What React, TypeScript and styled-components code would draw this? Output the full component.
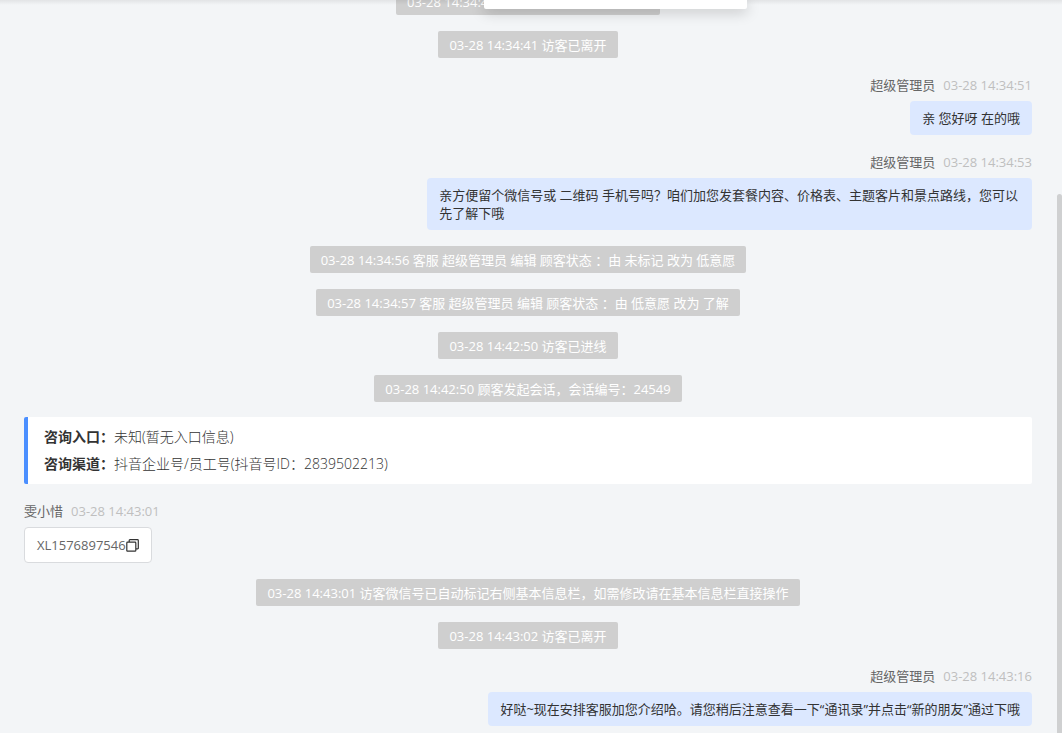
import React from 'react';
import styled, { createGlobalStyle } from 'styled-components';

const GlobalStyle = createGlobalStyle`
  *, *::before, *::after { box-sizing: border-box; }
  body {
    margin: 0;
    background: #f3f5f7;
    font-family: 'Open Sans', 'Noto Sans CJK SC', sans-serif;
    font-size: 13px;
    line-height: 18px;
    color: #333;
  }
`;

const Viewport = styled.div`
  position: relative;
  height: 100vh;
  overflow: hidden;
`;

const TopShade = styled.div`
  position: absolute;
  inset: 0 0 auto;
  height: 5px;
  background: linear-gradient(rgba(0, 0, 0, 0.07), rgba(0, 0, 0, 0));
`;

const DropPanel = styled.div`
  position: absolute;
  top: 0;
  left: 484px;
  width: 263px;
  height: 9px;
  background: #fff;
  border-radius: 0 0 2px 2px;
  box-shadow: 0 3px 14px rgba(0, 0, 0, 0.22);
`;

const ScrollThumb = styled.div`
  position: absolute;
  top: 194px;
  right: 0;
  bottom: 0;
  width: 5px;
  border-radius: 3px 3px 0 0;
  background: #cfd0d1;
`;

const Feed = styled.main`
  display: flex;
  flex-direction: column;
  gap: 16px;
  margin-top: -12px;
  padding: 0 30px 8px 24px;
`;

const Notice = styled.div<{ $minWidth?: number }>`
  align-self: center;
  min-width: ${(p) => p.$minWidth ?? 0}px;
  min-height: 27px;
  padding: 5px 11px 4px;
  border-radius: 2px;
  background: #cfcfcf;
  color: #fff;
`;

const Message = styled.article<{ $mine?: boolean }>`
  display: flex;
  flex-direction: column;
  align-items: ${(p) => (p.$mine ? 'flex-end' : 'flex-start')};
`;

const MessageHead = styled.header`
  display: flex;
  gap: 8px;
  margin-bottom: 5px;
  line-height: 22px;
  color: #666;
`;

const Time = styled.time`
  color: #bfbfbf;
`;

const Bubble = styled.div<{ $outlined?: boolean }>`
  display: flex;
  align-items: center;
  max-width: 60%;
  padding: 8px 12px;
  border: ${(p) => (p.$outlined ? '1px solid #d9dbde' : '0')};
  border-radius: 4px;
  background: ${(p) => (p.$outlined ? '#fff' : '#dce8ff')};
  color: ${(p) => (p.$outlined ? '#666' : '#333')};
`;

const CopyButton = styled.button`
  display: flex;
  padding: 0;
  border: 0;
  background: none;
  color: #333;
  cursor: pointer;
`;

const SourceCard = styled.dl`
  margin: -1px 0 0;
  padding: 6px 16px 7px;
  border-left: 4px solid #4b8fff;
  border-radius: 2px;
  background: #fff;
  font-size: 14px;
  line-height: 27px;
`;

const SourceRow = styled.div`
  display: flex;
`;

const SourceLabel = styled.dt`
  font-weight: 700;
`;

const SourceValue = styled.dd`
  margin: 0;
  font-weight: 300;
`;

const CopyIcon = () => (
  <svg width="13" height="13" viewBox="0 0 13 13" fill="none" stroke="currentColor" strokeWidth="1.2" aria-hidden="true">
    <rect x="0.8" y="3.2" width="9" height="9" rx="0.8" />
    <path d="M3.2 3V1.4a.7.7 0 0 1 .7-.7h7.6a.8.8 0 0 1 .8.8v7.7a.7.7 0 0 1-.7.7H10" />
  </svg>
);

const AgentMessage = ({ time, children }: { time: string; children: React.ReactNode }) => (
  <Message $mine>
    <MessageHead>
      <span>超级管理员</span>
      <Time>{time}</Time>
    </MessageHead>
    <Bubble>{children}</Bubble>
  </Message>
);

export default function App() {
  return (
    <Viewport>
      <GlobalStyle />
      <Feed>
        <Notice $minWidth={264}>03-28 14:34:41</Notice>
        <Notice>03-28 14:34:41 访客已离开</Notice>
        <AgentMessage time="03-28 14:34:51">亲 您好呀 在的哦</AgentMessage>
        <AgentMessage time="03-28 14:34:53">
          亲方便留个微信号或 二维码 手机号吗？咱们加您发套餐内容、价格表、主题客片和景点路线，您可以先了解下哦
        </AgentMessage>
        <Notice>03-28 14:34:56 客服 超级管理员 编辑 顾客状态 ：由 未标记 改为 低意愿</Notice>
        <Notice>03-28 14:34:57 客服 超级管理员 编辑 顾客状态 ：由 低意愿 改为 了解</Notice>
        <Notice>03-28 14:42:50 访客已进线</Notice>
        <Notice>03-28 14:42:50 顾客发起会话，会话编号：24549</Notice>
        <SourceCard>
          <SourceRow>
            <SourceLabel>咨询入口：</SourceLabel>
            <SourceValue>未知(暂无入口信息)</SourceValue>
          </SourceRow>
          <SourceRow>
            <SourceLabel>咨询渠道：</SourceLabel>
            <SourceValue>抖音企业号/员工号(抖音号ID：2839502213)</SourceValue>
          </SourceRow>
        </SourceCard>
        <Message>
          <MessageHead>
            <span>雯小惜</span>
            <Time>03-28 14:43:01</Time>
          </MessageHead>
          <Bubble $outlined>
            <span>XL1576897546</span>
            <CopyButton type="button" aria-label="复制">
              <CopyIcon />
            </CopyButton>
          </Bubble>
        </Message>
        <Notice>03-28 14:43:01 访客微信号已自动标记右侧基本信息栏，如需修改请在基本信息栏直接操作</Notice>
        <Notice>03-28 14:43:02 访客已离开</Notice>
        <AgentMessage time="03-28 14:43:16">
          好哒~现在安排客服加您介绍哈。请您稍后注意查看一下“通讯录”并点击“新的朋友”通过下哦
        </AgentMessage>
      </Feed>
      <TopShade />
      <DropPanel />
      <ScrollThumb />
    </Viewport>
  );
}
